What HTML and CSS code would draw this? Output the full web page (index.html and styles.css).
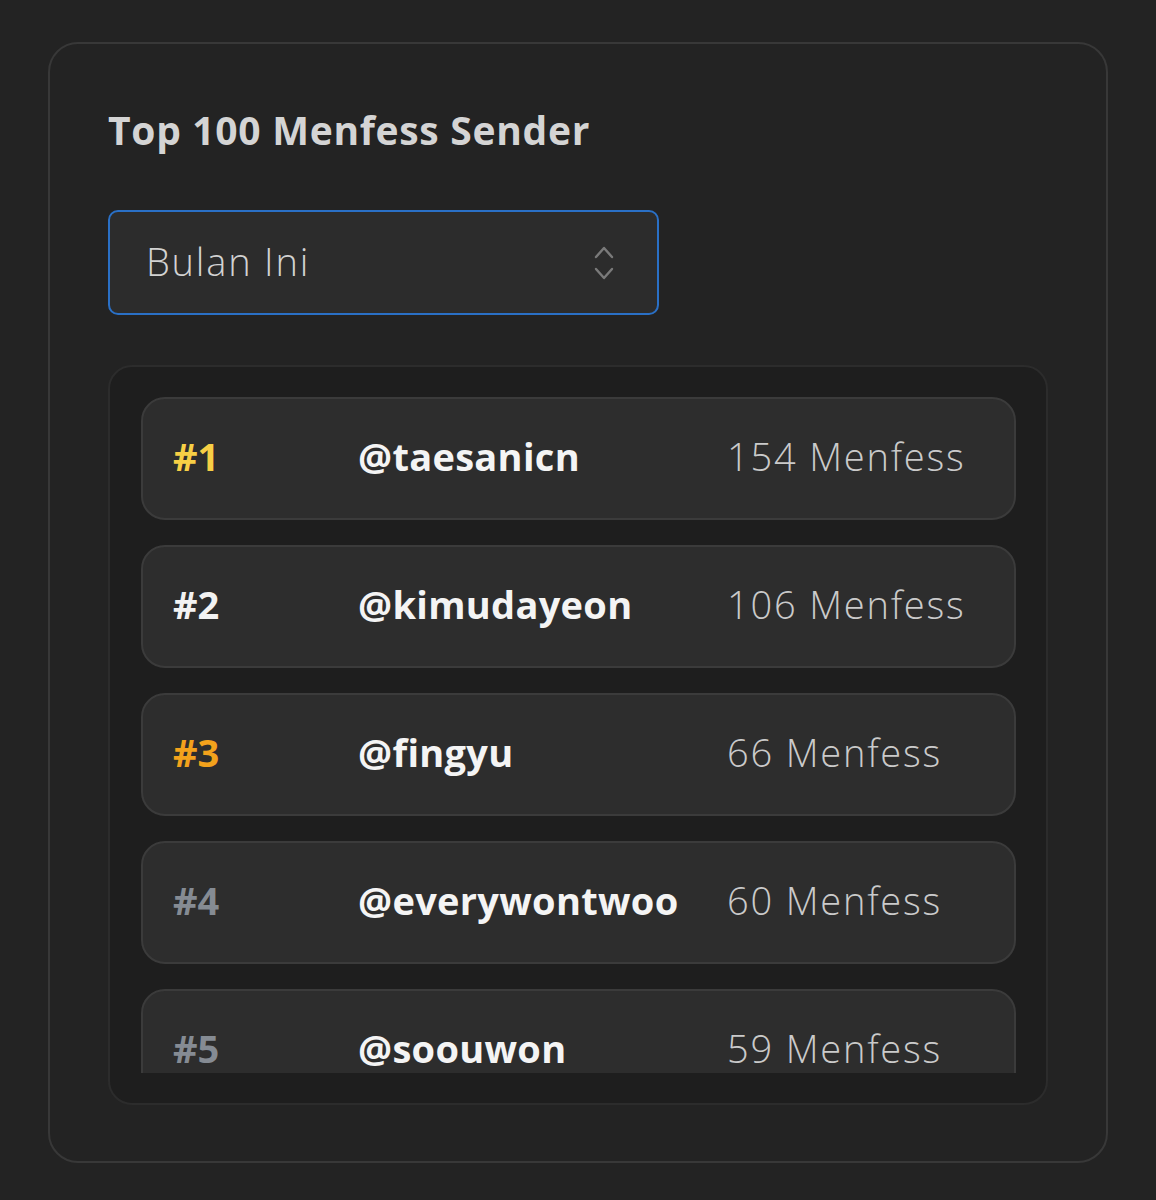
FILE: index.html
```html
<!DOCTYPE html>
<html>
<head>
<meta charset="utf-8">
<link rel="stylesheet" href="styles.css">
</head>
<body>
<div class="card">
  <h2 class="title">Top 100 Menfess Sender</h2>
  <div class="select">
    <span class="select-label">Bulan Ini</span>
    <svg class="chev" width="22" height="36" viewBox="0 0 22 36" fill="none" stroke="#7a7a7a" stroke-width="2.4" stroke-linecap="round" stroke-linejoin="round">
      <path d="M3 12 L11 3 L19 12"/>
      <path d="M3 24 L11 33 L19 24"/>
    </svg>
  </div>
  <div class="list-wrap">
    <div class="list">
      <div class="row"><span class="rank r1">#1</span><span class="user">@taesanicn</span><span class="count">154 Menfess</span></div>
      <div class="row"><span class="rank r2">#2</span><span class="user">@kimudayeon</span><span class="count">106 Menfess</span></div>
      <div class="row"><span class="rank r3">#3</span><span class="user">@fingyu</span><span class="count">66 Menfess</span></div>
      <div class="row"><span class="rank rn">#4</span><span class="user">@everywontwoo</span><span class="count">60 Menfess</span></div>
      <div class="row"><span class="rank rn">#5</span><span class="user">@soouwon</span><span class="count">59 Menfess</span></div>
    </div>
  </div>
</div>
</body>
</html>
```
FILE: styles.css
```css
* { box-sizing: border-box; }
html, body { margin: 0; padding: 0; }
body {
  background: #232323;
  font-family: "Open Sans", "Lato", sans-serif;
  padding: 42px 48px 0 48px;
}
.card {
  border: 2px solid #383838;
  border-radius: 30px;
  padding: 63px 58px 58px 58px;
  height: 1121px;
}
.title {
  margin: 0;
  font-size: 39px;
  font-weight: 700;
  letter-spacing: 0.7px;
  color: #d4d4d4;
  line-height: 46px;
}
.select {
  margin-top: 57px;
  width: 551px;
  height: 105px;
  border: 2px solid #2a70c6;
  border-radius: 10px;
  background: #2c2c2c;
  display: flex;
  align-items: center;
  justify-content: space-between;
  padding: 0 42px 4px 36px;
}
.select-label {
  font-size: 38px;
  font-weight: 300;
  letter-spacing: 1.8px;
  color: #d2d2d2;
}
.chev { display: block; margin-top: 4px; }
.list-wrap {
  margin-top: 50px;
  width: 940px;
  border: 2px solid #2c2c2c;
  border-radius: 24px;
  background: #1e1e1e;
  padding: 30px 30px 30px 31px;
}
.list {
  height: 676px;
  overflow: hidden;
  display: flex;
  flex-direction: column;
  gap: 25px;
}
.row {
  flex: 0 0 auto;
  height: 123px;
  border: 2px solid #3b3b3b;
  border-radius: 24px;
  background: #2d2d2d;
  display: grid;
  grid-template-columns: 185px 369px 1fr;
  align-items: center;
  padding: 0 0 5px 30px;
  font-size: 38px;
}
.rank { font-weight: 700; }
.r1 { color: #f7cf45; }
.r2 { color: #f2f2f2; }
.r3 { color: #f3a21c; }
.rn { color: #858b93; }
.user { font-weight: 700; color: #f4f4f4; letter-spacing: 0.3px; }
.count { font-weight: 300; letter-spacing: 1.8px; color: #cacaca; }
```
